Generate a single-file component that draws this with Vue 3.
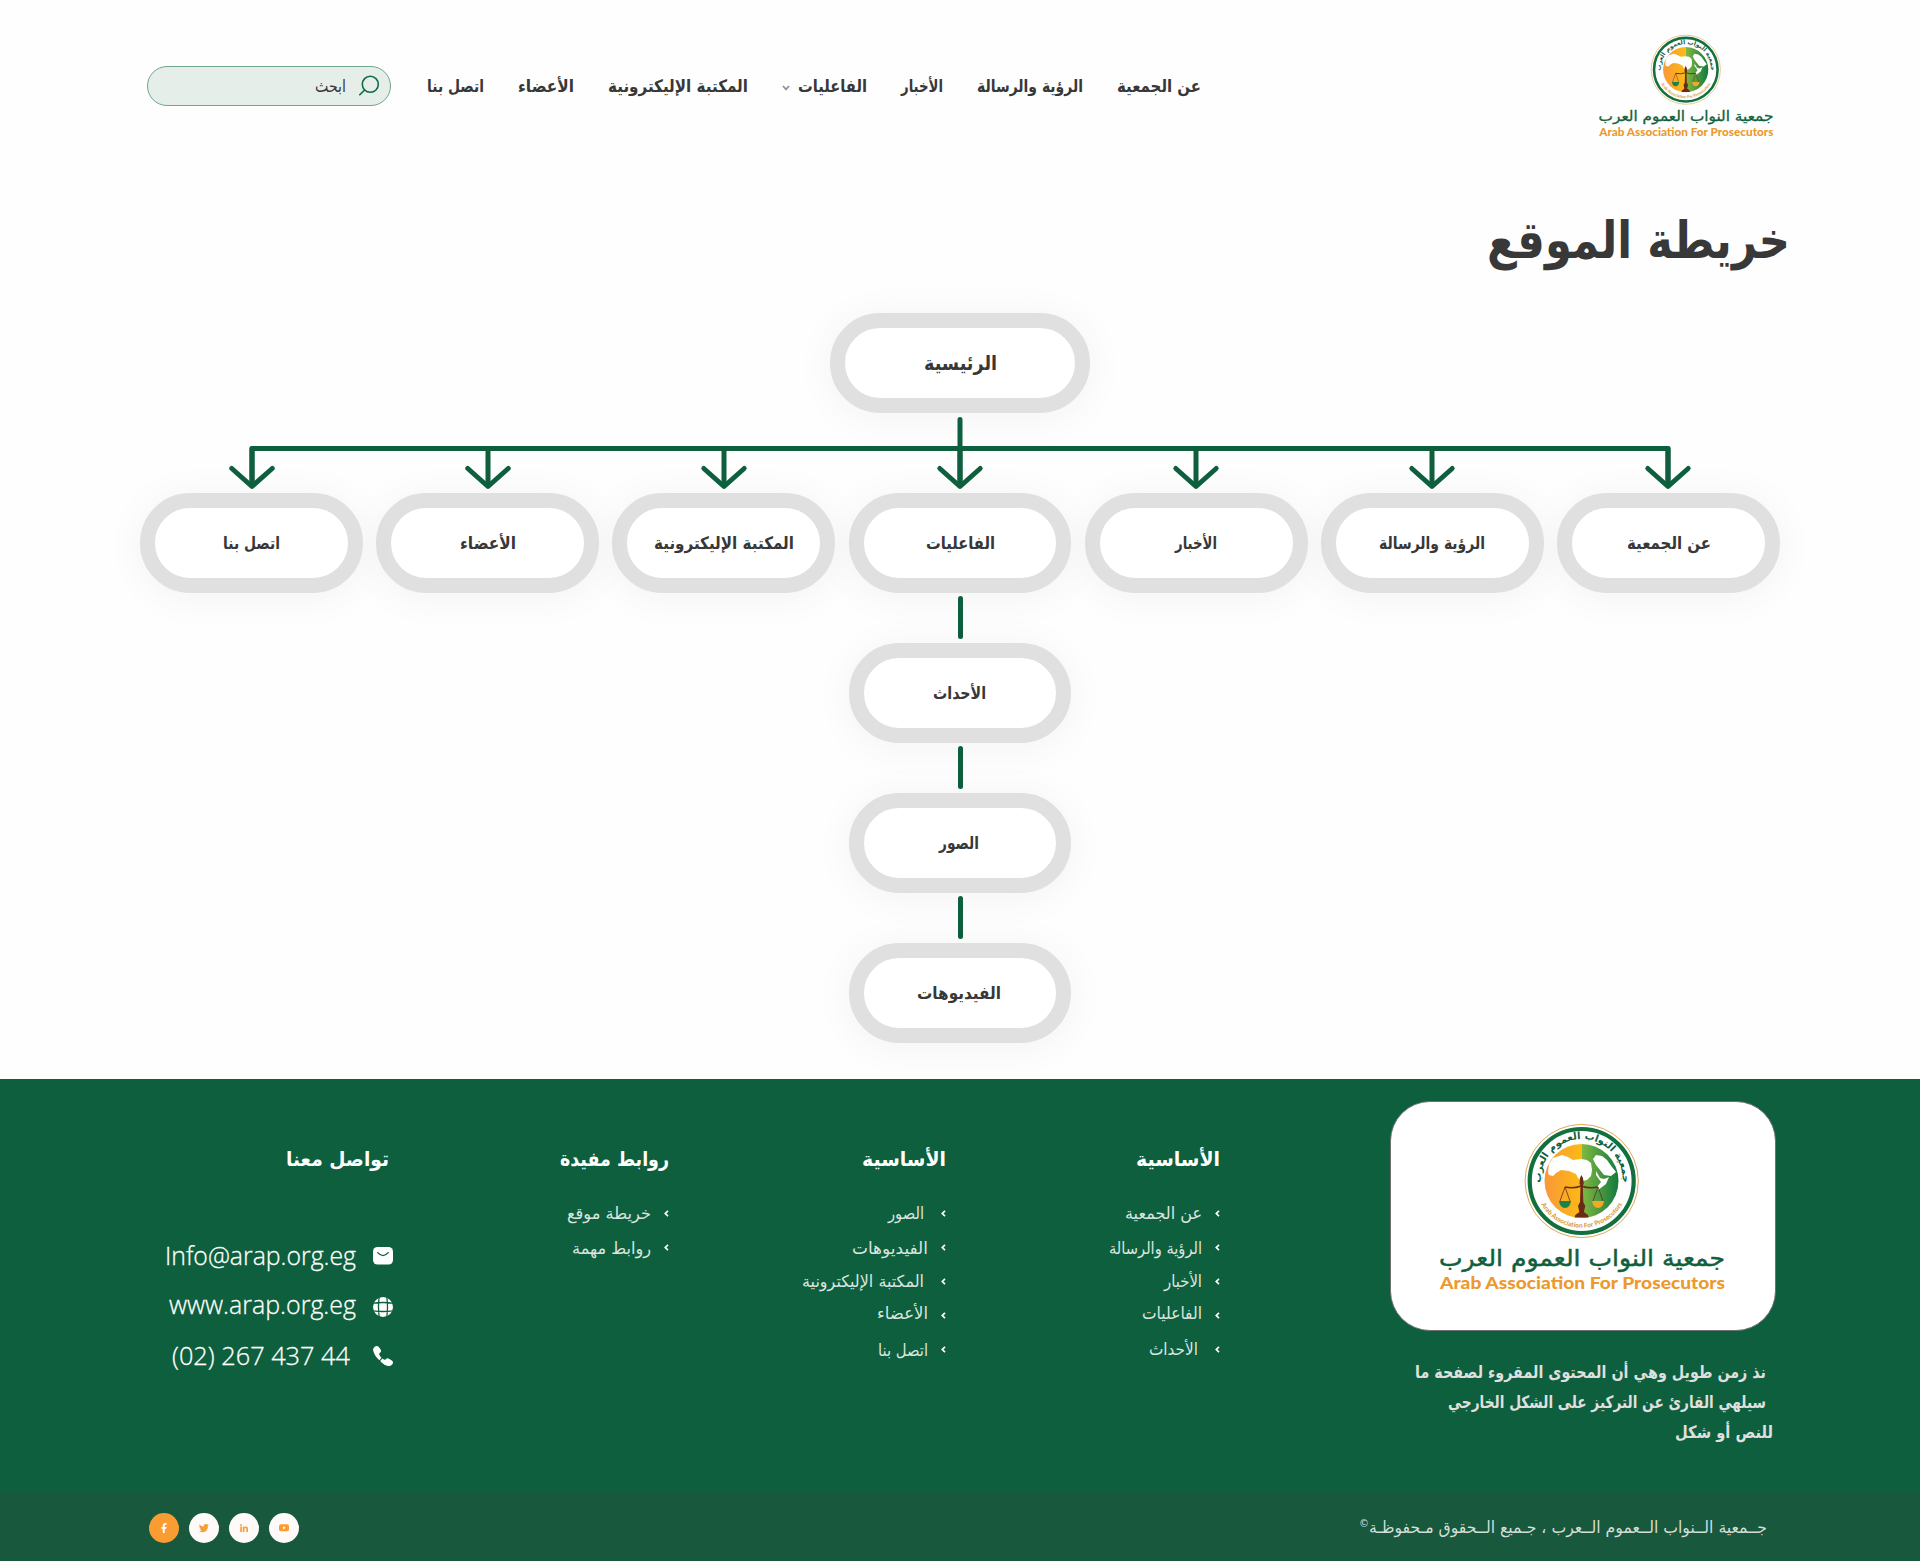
<template>
  <div class="page" dir="rtl">
    <!-- Emblem shared by the header and the footer card -->
    <svg class="defs" aria-hidden="true">
      <defs>
        <linearGradient id="sun" x1="0" x2="1">
          <stop offset="0" stop-color="#f8973a" />
          <stop offset="1" stop-color="#fdba14" />
        </linearGradient>
        <linearGradient id="leaf" x1="0" x2="1">
          <stop offset="0" stop-color="#82b941" />
          <stop offset="1" stop-color="#127a3e" />
        </linearGradient>
        <path id="arcTop" d="M110.8 72a41 41 0 1 1 77.8 0" />
        <path id="arcBottom" d="M102.9 60a46.8 46.8 0 0 0 93.6 0" />
        <symbol id="logo" viewBox="0 0 300 180">
          <circle cx="149.7" cy="60" r="56.6" fill="#fff" stroke="#dda950" stroke-width="1" />
          <circle cx="149.7" cy="60" r="52" fill="#fff" stroke="#12703f" stroke-width="4.2" />
          <path d="M149.5 23a37 37 0 0 0 0 74z" fill="url(#sun)" />
          <path d="M149.5 23a37 37 0 0 1 0 74z" fill="url(#leaf)" />
          <path
            fill="#fff"
            d="M116 51l1-8 4-6 9-3 6 2 5 3 8-1 6 1 4 3 1 7-1 6-4 4-5 1-4-3-2-4-7-3-8-1-5 3-3 3-4-1zM161 38l3-4 6 1 5 4 5 7 4 5-5 4-7-1-4-5-4-5zM164 50l4 7 4 1 5-2-3 7-8 6-1-3 4-5-5-7z"
          />
          <g fill="none" stroke="#6a2a16" stroke-width="1.5">
            <path d="M133 66q8 2 16-1 9 3 17 1" />
            <path d="M133 66l-5 14M133 66l5 14M166 66l-5 14M166 66l5 14" stroke-width=".8" />
          </g>
          <path d="M148 57l1.4-3 1.6 3 .8 6-1 1 .5 17 2 4-1.4 6 4 3 .7 2.5h-14l.7-2.5 4-3-1.3-6 2-4 .5-17-1-1z" fill="#6a2a16" />
          <path d="M127 80h12q-1 7-6 7t-6-7z" fill="#16854a" />
          <path d="M160 80h12q-1 7-6 7t-6-7z" fill="#f7a823" />
          <text class="ring-ar"><textPath href="#arcTop" startOffset="50%" text-anchor="middle">جمعية النواب العموم العرب</textPath></text>
          <text class="ring-en"><textPath href="#arcBottom" startOffset="50%" text-anchor="middle">Arab Association For Prosecutors</textPath></text>
          <text class="logo-ar" x="150" y="144.5" textLength="286" lengthAdjust="spacingAndGlyphs">جمعية النواب العموم العرب</text>
          <text class="logo-en" x="150.5" y="168" textLength="285" lengthAdjust="spacingAndGlyphs">Arab Association For Prosecutors</text>
        </symbol>
      </defs>
    </svg>

    <header class="header">
      <svg class="logo-small"><use href="#logo" /></svg>
      <div class="header-end">
        <nav class="nav">
          <a v-for="item in nav" :key="item.text">
            <span v-fit="item.width">{{ item.text }}</span>
            <svg v-if="item.menu" class="chevron" viewBox="0 0 8 6"><path d="M1 1l3 3.4L7 1" /></svg>
          </a>
        </nav>
        <div class="search">
          <svg viewBox="0 0 22 22"><circle cx="12.3" cy="9.3" r="8" /><path d="M6.6 15L1.8 19.8" /></svg>
          <span v-fit="31">ابحث</span>
        </div>
      </div>
    </header>

    <main>
      <h1><span v-fit="303">خريطة الموقع</span></h1>

      <section class="sitemap">
        <div class="node root"><span v-fit="73">الرئيسية</span></div>
        <svg class="arrows" viewBox="0 0 1640 80">
          <path d="M820 6.5V70M112 70V35.5H1528V70" />
          <path v-for="n in 7" :key="n" :d="`M${112 + (n - 1) * 236} 35.5v34`" />
          <path v-for="n in 7" :key="'h' + n" :d="`M${91.8 + (n - 1) * 236} 55.5l20.2 18 20.2-18`" />
        </svg>
        <div class="row">
          <div v-for="item in sections" :key="item.text" class="node">
            <span v-fit="item.width">{{ item.text }}</span>
          </div>
        </div>
        <template v-for="item in events" :key="item.text">
          <i class="link-line"></i>
          <div class="node child"><span v-fit="item.width">{{ item.text }}</span></div>
        </template>
      </section>
    </main>

    <footer class="footer">
      <div class="footer-main">
        <div class="about">
          <div class="card"><svg><use href="#logo" /></svg></div>
          <p>
            <span v-for="line in about" :key="line.text" v-fit="line.width" :class="{ inset: line.inset }">{{ line.text }}</span>
          </p>
        </div>

        <div v-for="(col, i) in columns" :key="i" class="column" :class="'column-' + i">
          <h2><span v-fit="col.width">{{ col.title }}</span></h2>
          <ul>
            <li v-for="item in col.links" :key="item.text" :class="{ far: item.far }">
              <svg viewBox="0 0 5 7"><path d="M4 .9L1.3 3.5 4 6.1" /></svg>
              <span v-fit="item.width" :class="item.shift">{{ item.text }}</span>
            </li>
          </ul>
        </div>

        <div class="contact">
          <h2><span v-fit="103">تواصل معنا</span></h2>
          <div class="contact-row">
            <svg viewBox="0 0 20 20">
              <rect y="1" width="20" height="17.6" rx="4.5" fill="#fff" />
              <path d="M4.8 6.6q5.2 6 10.4 0" fill="none" stroke="#0e5f3d" stroke-width="1.3" stroke-linecap="round" />
            </svg>
            <span v-fit="191" dir="ltr">Info@arap.org.eg</span>
          </div>
          <div class="contact-row web">
            <svg viewBox="0 0 20 20">
              <circle cx="10" cy="10" r="10" fill="#fff" />
              <path d="M0 6.2q10-1.4 20 0M0 13.8q10 1.4 20 0M6.2 0q-1.4 10 0 20M13.8 0q1.4 10 0 20" fill="none" stroke="#0e5f3d" stroke-width="1.3" />
            </svg>
            <span v-fit="187" dir="ltr">www.arap.org.eg</span>
          </div>
          <div class="contact-row phone">
            <svg viewBox="0 0 20 20">
              <path d="M1.2 1.2Q3.6-.8 5.6.8l2 2.8q1.2 2-.8 3.4-.9.7-.5 1.8 1 1.8 2.2 3l-2.2 2.4Q1.5 10 .2 4.8-.3 2.6 1.2 1.2zM9.3 12.6q1.2 1 2.3 1.2.7 0 1.4-.9 1.3-1 3-.2l2.8 1.8q2.2 1.7.5 3.7-2.6 3.4-7.8.6-2.3-1.4-4.3-3.7z" fill="#fff" />
            </svg>
            <span v-fit="178" dir="ltr">(02) 267 437 44</span>
          </div>
        </div>
      </div>

      <div class="bottom">
        <p class="copyright"><span v-fit="398">جــمعية الــنواب الــعموم الــعرب ، جـميع الــحقوق مـحفوظـة</span><small>©</small></p>
        <div class="socials">
          <a class="social">
            <svg viewBox="0 0 10 10"><rect width="10" height="7" y="1.3" rx="2" /><path d="M4 3.2v3.2l2.7-1.6z" fill="#fff" /></svg>
          </a>
          <a class="social">
            <svg viewBox="0 0 10 10"><path d="M1.2 3.6h1.7V9H1.2zM3.8 3.6h1.6v.8q.5-.9 1.7-.9Q9 3.5 9 5.8V9H7.3V6.2Q7.3 5 6.5 5q-1 0-1 1.2V9H3.800z" /><circle cx="2" cy="2" r=".95" /></svg>
          </a>
          <a class="social">
            <svg viewBox="0 0 10 10"><path d="M.4 1.400Q2.200 3.400 4.800 3.500 4.500 1 6.700.9q1 0 1.500.6l1.300-.5-.8 1.200 1.200-.3-1 1.200Q8.900 7 6.300 8.500 3.200 9.900 0 8.200q1.700 0 2.900-.9Q1.400 7.100 1 5.900h.9Q.4 5.300.3 3.800l.9.200Q-.3 2.800.4 1.400z" /></svg>
          </a>
          <a class="social active">
            <svg viewBox="0 0 10 10"><path d="M3.8 10V5.8H2.400V4h1.400V2.800Q3.800.1 6.300 0h1.300v1.700h-.9q-1 0-1 1V4h1.900l-.3 1.800H5.700V10z" /></svg>
          </a>
        </div>
      </div>
    </footer>
  </div>
</template>

<script setup>
// Squeezes or stretches a label so that it takes exactly the given width
const vFit = {
  mounted(el, { value }) {
    const natural = el.getBoundingClientRect().width
    el.style.width = `${value}px`
    el.style.transform = `scaleX(${value / natural})`
  }
}

const nav = [
  { text: 'عن الجمعية', width: 84 },
  { text: 'الرؤية والرسالة', width: 106 },
  { text: 'الأخبار', width: 42 },
  { text: 'الفاعليات', width: 69, menu: true },
  { text: 'المكتبة الإليكترونية', width: 140 },
  { text: 'الأعضاء', width: 56 },
  { text: 'اتصل بنا', width: 57 }
]

const sections = nav

const events = [
  { text: 'الأحداث', width: 53 },
  { text: 'الصور', width: 40 },
  { text: 'الفيديوهات', width: 84 }
]

const about = [
  { text: 'نذ زمن طويل وهي أن المحتوى المقروء لصفحة ما', width: 351, inset: true },
  { text: 'سيلهي القارئ عن التركيز على الشكل الخارجي', width: 318, inset: true },
  { text: 'للنص أو شكل', width: 98 }
]

const columns = [
  {
    title: 'الأساسية',
    width: 84,
    links: [
      { text: 'عن الجمعية', width: 77 },
      { text: 'الرؤية والرسالة', width: 93, shift: 'down' },
      { text: 'الأخبار', width: 38 },
      { text: 'الفاعليات', width: 60, shift: 'up' },
      { text: 'الأحداث', width: 49, far: true }
    ]
  },
  {
    title: 'الأساسية',
    width: 84,
    links: [
      { text: 'الصور', width: 36, far: true },
      { text: 'الفيديوهات', width: 76, shift: 'down' },
      { text: 'المكتبة الإليكترونية', width: 122, far: true },
      { text: 'الأعضاء', width: 51, shift: 'up' },
      { text: 'اتصل بنا', width: 50, shift: 'down' }
    ]
  },
  {
    title: 'روابط مفيدة',
    width: 109,
    links: [
      { text: 'خريطة موقع', width: 84 },
      { text: 'روابط مهمة', width: 79, shift: 'down' }
    ]
  }
]
</script>

<style>
body {
  margin: 0;
  background: #fefefe;
}
</style>

<style scoped>
.page {
  width: 1920px;
  height: 1561px;
  display: flex;
  flex-direction: column;
  overflow: hidden;
  background: #fefefe;
  color: #383838;
  font-family: "DejaVu Sans", sans-serif;
}

h1, h2, p, ul {
  margin: 0;
  padding: 0;
}

span {
  display: inline-block;
  flex: none;
  width: max-content;
  white-space: nowrap;
  transform-origin: right center;
}

span[dir="ltr"] {
  transform-origin: left center;
}

.defs {
  position: absolute;
  width: 0;
  height: 0;
}

.ring-ar {
  font: bold 10px "DejaVu Sans", sans-serif;
  fill: #11603c;
}

.ring-en {
  font: 900 6.6px Lato, sans-serif;
  fill: #d9a045;
  direction: ltr;
}

.logo-ar {
  font: 23px "DejaVu Sans", sans-serif;
  fill: #11603c;
  stroke: #11603c;
  stroke-width: .5px;
  text-anchor: middle;
}

.logo-en {
  font: 900 17.5px Lato, sans-serif;
  fill: #ec9a2e;
  direction: ltr;
  text-anchor: middle;
}

.header {
  height: 172px;
  flex: none;
  display: flex;
  align-items: center;
  justify-content: space-between;
  padding: 0 142px 0 147px;
}

.logo-small {
  width: 184px;
  height: 110px;
  margin-top: 4px;
}

.header-end,
.nav,
.nav a {
  display: flex;
  align-items: center;
}

.header-end {
  gap: 36px;
}

.nav {
  gap: 34px;
  font-size: 17px;
  font-weight: 700;
}

.chevron {
  width: 8px;
  height: 6px;
  margin: 3px 8px 0 0;
  fill: none;
  stroke: #929292;
  stroke-width: 1.7;
}

.search {
  box-sizing: border-box;
  width: 244px;
  height: 40px;
  display: flex;
  align-items: center;
  gap: 12px;
  padding-right: 10px;
  border: 1px solid #70a68d;
  border-radius: 20px;
  background: #e5eee9;
  font-size: 17px;
}

.search svg {
  width: 22px;
  height: 22px;
  fill: none;
  stroke: #0e6b42;
  stroke-width: 1.6;
  stroke-linecap: round;
}

h1 {
  height: 141px;
  padding-right: 130px;
  line-height: 137px;
  font-size: 51px;
}

.sitemap {
  width: 1640px;
  margin: 0 auto;
  display: flex;
  flex-direction: column;
  align-items: center;
}

.node {
  box-sizing: border-box;
  height: 100px;
  display: flex;
  align-items: center;
  justify-content: center;
  border: 15px solid #e0e0e0;
  border-radius: 50px;
  background: #fff;
  box-shadow: 0 4px 40px rgba(40, 40, 80, .05);
  font-size: 17px;
  font-weight: 700;
}

.root {
  width: 260px;
  font-size: 20px;
}

.child {
  width: 222px;
}

.child span {
  margin-right: 2px;
}

.arrows {
  width: 1640px;
  height: 80px;
  position: relative;
  z-index: 1;
  fill: none;
  stroke: #0e5f3d;
  stroke-width: 5;
  stroke-linecap: round;
  stroke-linejoin: round;
}

.row {
  width: 100%;
  display: grid;
  grid-template-columns: repeat(7, 1fr);
  gap: 13.5px;
}

.link-line {
  width: 5px;
  height: 43px;
  margin: 3px 0 4px;
  border-radius: 3px;
  background: #0e5f3d;
}

.footer {
  margin-top: auto;
  height: 482px;
  flex: none;
  background: #0e5f3d;
  color: #fff;
}

.footer-main {
  height: 412px;
  display: flex;
  padding-right: 144px;
}

.about {
  width: 386px;
  padding-top: 22px;
}

.card {
  box-sizing: border-box;
  height: 230px;
  padding: 19px 43px 0 0;
  border: 1px solid #707070;
  border-radius: 40px;
  background: #fff;
}

.card svg {
  width: 300px;
  height: 180px;
}

.about p {
  display: flex;
  flex-direction: column;
  padding: 26px 3px 0 0;
  line-height: 30px;
  font-size: 17px;
  font-weight: 700;
  color: #dfdfdf;
}

.about .inset {
  margin-right: 7px;
}

.column,
.contact {
  padding-top: 65px;
}

.column-0 {
  margin-right: 170px;
  width: 274px;
}

.column-1 {
  width: 277px;
}

.column-2 {
  width: 280px;
}

h2 {
  height: 52px;
  line-height: 30px;
  font-size: 20px;
}

ul {
  list-style: none;
  color: #dbe6e0;
  font-size: 16.5px;
}

li {
  height: 34px;
  display: flex;
  align-items: center;
  gap: 13px;
}

li.far {
  gap: 17px;
}

li svg {
  width: 5px;
  height: 7px;
  fill: none;
  stroke: #fff;
  stroke-width: 1.7;
}

li .down {
  position: relative;
  top: 1px;
}

li .up {
  position: relative;
  top: -2px;
}

.contact h2 {
  height: 87px;
}

.contact-row {
  height: 50px;
  display: flex;
  align-items: center;
  gap: 17px;
  margin-right: -4px;
  font: 300 26px "Open Sans", sans-serif;
  -webkit-text-stroke: .3px #fff;
}

.contact-row span {
  margin-top: -3px;
}

.contact-row svg {
  width: 20px;
  height: 20px;
}

.contact-row.web svg {
  margin-top: 2px;
}

.contact-row.web span {
  margin-top: -5px;
}

.contact-row.phone {
  gap: 23px;
}

.bottom {
  height: 70px;
  box-sizing: border-box;
  display: flex;
  align-items: center;
  justify-content: space-between;
  padding: 3px 153px 0 149px;
  background: #18583c;
}

.copyright {
  display: flex;
  color: #d5dfd9;
  font-size: 16.5px;
}

.copyright small {
  font-size: 10px;
}

.socials {
  display: flex;
  gap: 10px;
}

.social {
  width: 30px;
  height: 30px;
  display: flex;
  align-items: center;
  justify-content: center;
  border-radius: 50%;
  background: #fffafa;
  fill: #f99d33;
}

.social.active {
  background: #f99d33;
  fill: #fff;
}

.social svg {
  width: 10px;
  height: 10px;
}
</style>
